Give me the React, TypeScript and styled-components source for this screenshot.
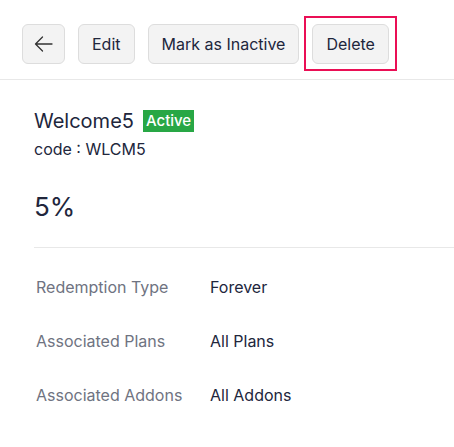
import styled, { createGlobalStyle } from "styled-components";

const GlobalStyle = createGlobalStyle`
  html, body {
    margin: 0;
    padding: 0;
    background: #ffffff;
    font-family: Inter, "Noto Sans", sans-serif;
    color: #21263c;
  }
`;

const Page = styled.div`
  width: 454px;
  overflow: hidden;
`;

const Toolbar = styled.div`
  display: flex;
  align-items: center;
  gap: 13px;
  padding: 24px 22px 15px;
  border-bottom: 1px solid #e8e8e8;
`;

const Button = styled.button`
  height: 40px;
  padding: 0 13px;
  display: flex;
  align-items: center;
  justify-content: center;
  background: #f3f3f3;
  border: 1px solid #dddddd;
  border-radius: 6px;
  font-family: inherit;
  font-size: 16px;
  color: #21263c;
`;

const IconButton = styled(Button)`
  width: 43px;
  padding: 0;
`;

const FocusFrame = styled.span`
  position: relative;
  display: flex;
  &::after {
    content: "";
    position: absolute;
    inset: -8px -8px -7px -8px;
    border: 2px solid #ea0f55;
    pointer-events: none;
  }
`;

const Body = styled.div`
  padding: 28px 0 0 34px;
`;

const TitleRow = styled.div`
  display: flex;
  align-items: center;
  gap: 9px;
`;

const Title = styled.h1`
  margin: 0;
  font-size: 20px;
  font-weight: 400;
  line-height: 26px;
`;

const Badge = styled.span`
  background: #28a745;
  color: #ffffff;
  font-size: 15px;
  font-weight: 500;
  line-height: 22px;
  padding: 0 3px;
`;

const Code = styled.div`
  margin-top: 5px;
  font-size: 16px;
  line-height: 20px;
`;

const Amount = styled.div`
  margin-top: 33px;
  font-size: 26px;
  line-height: 30px;
  padding-bottom: 25px;
  border-bottom: 1px solid #e8e8e8;
`;

const Details = styled.div`
  padding-top: 12px;
`;

const DetailRow = styled.div`
  display: grid;
  grid-template-columns: 174px 1fr;
  align-items: center;
  height: 54px;
  font-size: 16px;
  padding-left: 2px;
`;

const Label = styled.span`
  color: #6f7381;
`;

const Value = styled.span`
  color: #21263c;
`;

const details = [
  ["Redemption Type", "Forever"],
  ["Associated Plans", "All Plans"],
  ["Associated Addons", "All Addons"],
];

export default function App() {
  return (
    <Page>
      <GlobalStyle />
      <Toolbar>
        <IconButton aria-label="Back">
          <svg width="19" height="16" viewBox="0 0 19 16" fill="none">
            <path
              d="M18 8H1.5M8.5 1L1.5 8l7 7"
              stroke="#333"
              strokeWidth="1.3"
              strokeLinecap="round"
              strokeLinejoin="round"
            />
          </svg>
        </IconButton>
        <Button>Edit</Button>
        <Button>Mark as Inactive</Button>
        <FocusFrame>
          <Button>Delete</Button>
        </FocusFrame>
      </Toolbar>
      <Body>
        <TitleRow>
          <Title>Welcome5</Title>
          <Badge>Active</Badge>
        </TitleRow>
        <Code>code : WLCM5</Code>
        <Amount>5%</Amount>
        <Details>
          {details.map(([label, value]) => (
            <DetailRow key={label}>
              <Label>{label}</Label>
              <Value>{value}</Value>
            </DetailRow>
          ))}
        </Details>
      </Body>
    </Page>
  );
}
